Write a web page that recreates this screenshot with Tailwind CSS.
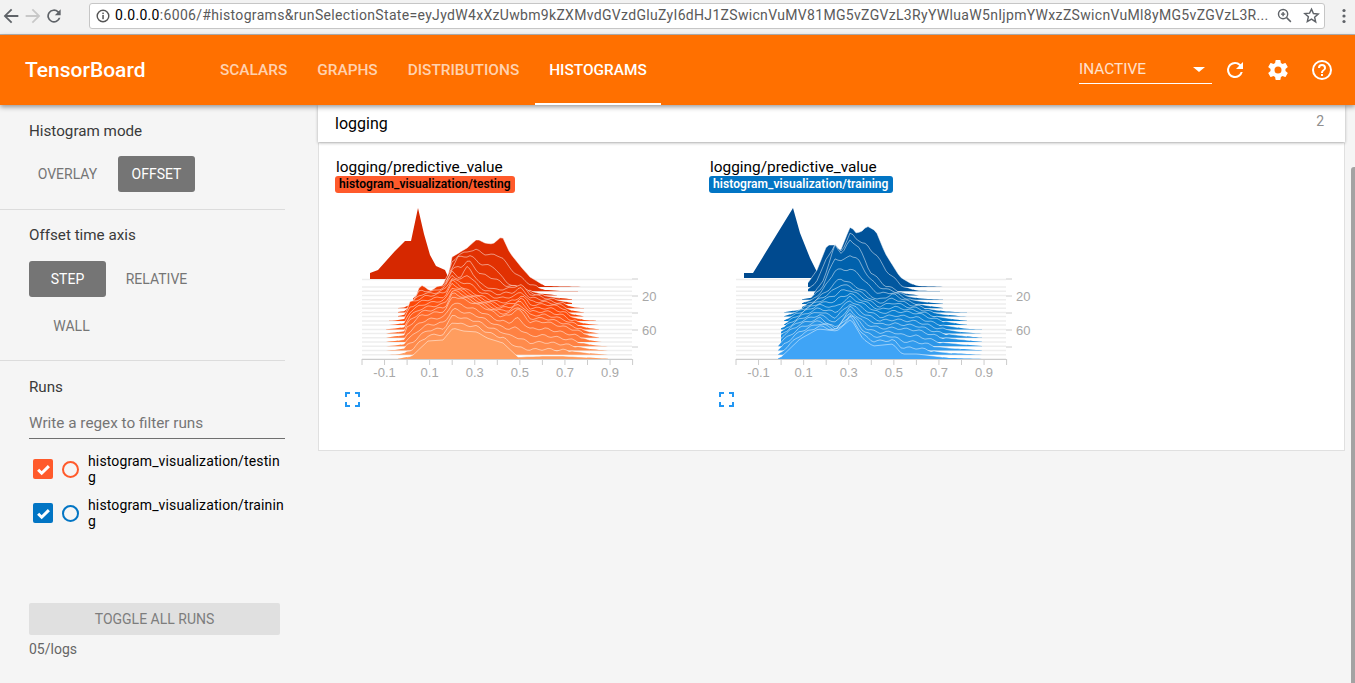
<!DOCTYPE html>
<html lang="en">
<head>
  <meta charset="UTF-8" />
  <title>TensorBoard</title>
  <script src="https://cdn.jsdelivr.net/npm/@tailwindcss/browser@4"></script>
</head>
<body class="h-[683px] overflow-hidden bg-[#f5f5f5] font-['Roboto',sans-serif] text-[14px] flex flex-col">
  <!-- browser chrome -->
  <div class="h-[35px] shrink-0 bg-[#f2f2f2] border-b border-[#b5b5b5] flex items-center pb-[3px]">
    <div class="w-[89px] flex items-center shrink-0">
      <svg width="22" height="22" viewBox="0 0 24 24"><path d="M20 11H7.8l5.6-5.6L12 4l-8 8 8 8 1.4-1.4L7.8 13H20z" fill="#5f6368"/></svg>
      <svg width="22" height="22" viewBox="0 0 24 24"><path d="M4 11h12.2l-5.6-5.6L12 4l8 8-8 8-1.4-1.4 5.6-5.6H4z" fill="#c8c8c8"/></svg>
      <svg width="20" height="20" viewBox="0 0 24 24"><path d="M17.6 6.4A8 8 0 1 0 19.7 14h-2.1a6 6 0 1 1-1.4-6.2L13 11h7V4z" fill="#5f6368"/></svg>
    </div>
    <div class="w-[1236px] h-[26px] bg-white border border-[#c6c6c6] rounded-[3px] flex items-center shrink-0">
      <svg width="14" height="14" viewBox="0 0 14 14" class="ml-[6px] mr-[5px] shrink-0"><circle cx="7" cy="7" r="5.8" fill="none" stroke="#555" stroke-width="1.4"/><rect x="6.3" y="6" width="1.5" height="4.2" fill="#555"/><rect x="6.3" y="3.6" width="1.5" height="1.5" fill="#555"/></svg>
      <div class="w-[1151px] whitespace-nowrap text-[14px] text-[#5a5a5a] tracking-[0.32px]"><span class="text-black">0.0.0.0</span>:6006/#histograms&amp;runSelectionState=eyJydW4xXzUwbm9kZXMvdGVzdGluZyI6dHJ1ZSwicnVuMV81MG5vZGVzL3RyYWluaW5nIjpmYWxzZSwicnVuMl8yMG5vZGVzL3R...</div>
      <svg width="17" height="17" viewBox="0 0 24 24" class="ml-[10px] shrink-0"><circle cx="10" cy="10" r="6.5" fill="none" stroke="#5f6368" stroke-width="2"/><path d="M15 15l6 6M7 10h6M10 7v6" stroke="#5f6368" stroke-width="2" fill="none"/></svg>
      <svg width="17" height="17" viewBox="0 0 24 24" class="ml-[10px] shrink-0"><path d="M12 3l2.7 6.2 6.8.6-5.1 4.5 1.5 6.7L12 17l-5.9 3.5 1.5-6.7-5.1-4.5 6.8-.6z" fill="none" stroke="#5f6368" stroke-width="2"/></svg>
    </div>
    <svg width="4" height="16" viewBox="0 0 4 16" class="ml-[17px]"><circle cx="2" cy="2.5" r="1.6" fill="#5f6368"/><circle cx="2" cy="8" r="1.6" fill="#5f6368"/><circle cx="2" cy="13.5" r="1.6" fill="#5f6368"/></svg>
  </div>

  <!-- toolbar -->
  <header class="relative z-20 h-[70px] shrink-0 bg-[#ff7000] text-white flex items-center shadow-[0_2px_5px_rgba(0,0,0,0.4)]">
    <div class="w-[206px] pl-[25px] pt-[2px] text-[21px] font-medium shrink-0">TensorBoard</div>
    <nav class="flex h-full gap-[2px] text-[15.4px]">
      <a class="h-full flex items-center px-[14px] pt-[2px] text-white/70 font-medium">SCALARS</a>
      <a class="h-full flex items-center px-[14px] pt-[2px] text-white/70 font-medium">GRAPHS</a>
      <a class="h-full flex items-center px-[14px] pt-[2px] text-white/70 font-medium">DISTRIBUTIONS</a>
      <a class="h-full flex items-center px-[14px] font-medium border-b-2 border-white pt-[4px]">HISTOGRAMS</a>
    </nav>
    <div class="ml-auto flex items-center pr-[21px]">
      <div class="w-[133px] h-[29px] border-b border-white flex items-center justify-between text-white/80 text-[15.4px] pr-[7px] pt-[2px] mb-[2px]">
        <span>INACTIVE</span>
        <span class="w-0 h-0 border-x-[6px] border-x-transparent border-t-[5px] border-t-white"></span>
      </div>
      <svg width="24" height="24" viewBox="0 0 24 24" fill="#fff" class="ml-[11px]"><path d="M17.65 6.35A7.96 7.96 0 0 0 12 4a8 8 0 1 0 7.73 10h-2.08A6 6 0 1 1 12 6c1.66 0 3.14.69 4.22 1.78L13 11h7V4z"/></svg>
      <svg width="24" height="24" viewBox="0 0 24 24" fill="#fff" class="ml-[19px]"><path d="M19.43 12.98c.04-.32.07-.64.07-.98s-.03-.66-.07-.98l2.11-1.65a.5.5 0 0 0 .12-.64l-2-3.46a.5.5 0 0 0-.61-.22l-2.49 1a7.3 7.3 0 0 0-1.69-.98l-.38-2.65A.49.49 0 0 0 14 2h-4a.49.49 0 0 0-.49.42l-.38 2.65c-.61.25-1.17.59-1.69.98l-2.49-1a.49.49 0 0 0-.61.22l-2 3.46a.49.49 0 0 0 .12.64l2.11 1.65c-.04.32-.07.65-.07.98s.03.66.07.98l-2.11 1.65a.5.5 0 0 0-.12.64l2 3.46c.12.22.39.3.61.22l2.49-1c.52.4 1.08.73 1.69.98l.38 2.65c.03.24.24.42.49.42h4c.25 0 .46-.18.49-.42l.38-2.65c.61-.25 1.17-.59 1.69-.98l2.49 1c.23.09.49 0 .61-.22l2-3.46a.5.5 0 0 0-.12-.64zM12 15.5a3.5 3.5 0 1 1 0-7 3.5 3.5 0 0 1 0 7z"/></svg>
      <svg width="24" height="24" viewBox="0 0 24 24" fill="#fff" class="ml-[20px]"><path d="M11 18h2v-2h-2zm1-16a10 10 0 1 0 0 20 10 10 0 0 0 0-20zm0 18a8 8 0 1 1 0-16 8 8 0 0 1 0 16zm0-14a4 4 0 0 0-4 4h2a2 2 0 1 1 4 0c0 2-3 1.75-3 5h2c0-2.25 3-2.5 3-5a4 4 0 0 0-4-4z"/></svg>
    </div>
  </header>

  <div class="flex flex-1 min-h-0">
    <!-- sidebar -->
    <aside class="w-[318px] shrink-0 flex flex-col">
      <div class="w-[285px]">
        <div class="pl-[29px] pt-[17px] pb-[17px] border-b border-[#dcdcdc]">
          <div class="text-[15.2px] leading-[18px] text-[#3a3a3a]">Histogram mode</div>
          <div class="flex mt-[16px] text-[#757575]">
            <span class="w-[77px] h-[36px] flex items-center justify-center mr-[12px]">OVERLAY</span>
            <span class="w-[77px] h-[36px] flex items-center justify-center bg-[#757575] text-white rounded-[3px]">OFFSET</span>
          </div>
        </div>
        <div class="pl-[29px] pt-[16px] pb-[16px] border-b border-[#dcdcdc]">
          <div class="text-[15.2px] leading-[18px] text-[#3a3a3a]">Offset time axis</div>
          <div class="flex mt-[17px] text-[#757575]">
            <span class="w-[77px] h-[36px] flex items-center justify-center bg-[#757575] text-white rounded-[3px] mr-[12px]">STEP</span>
            <span class="w-[77px] h-[36px] flex items-center justify-center">RELATIVE</span>
          </div>
          <div class="w-[85px] h-[36px] mt-[11px] flex items-center justify-center text-[#757575]">WALL</div>
        </div>
        <div class="pl-[29px] pt-[17px]">
          <div class="text-[15.2px] leading-[18px] text-[#3a3a3a]">Runs</div>
          <div class="mt-[11px] h-[32px] border-b border-[#6f6f6f] flex items-center pt-[2px] text-[15.3px] text-[#757575]">Write a regex to filter runs</div>
          <div class="flex items-center mt-[14px]">
            <span class="w-[20px] h-[20px] ml-[4px] rounded-[2px] bg-[#ff5a2b] flex items-center justify-center shrink-0"><svg width="15" height="15" viewBox="0 0 14 14"><path d="M2 7.2l3.3 3.3L12 3.8" fill="none" stroke="#fff" stroke-width="2.8"/></svg></span>
            <span class="w-[17px] h-[17px] ml-[9px] rounded-full border-2 border-[#ff5a2b] shrink-0"></span>
            <span class="ml-[9px] w-[197px] leading-[16px] tracking-[0.13px] text-black [overflow-wrap:anywhere]">histogram_visualization/testing</span>
          </div>
          <div class="flex items-center mt-[12px]">
            <span class="w-[20px] h-[20px] ml-[4px] rounded-[2px] bg-[#0275c4] flex items-center justify-center shrink-0"><svg width="15" height="15" viewBox="0 0 14 14"><path d="M2 7.2l3.3 3.3L12 3.8" fill="none" stroke="#fff" stroke-width="2.8"/></svg></span>
            <span class="w-[17px] h-[17px] ml-[9px] rounded-full border-2 border-[#0275c4] shrink-0"></span>
            <span class="ml-[9px] w-[197px] leading-[16px] tracking-[0.13px] text-black [overflow-wrap:anywhere]">histogram_visualization/training</span>
          </div>
        </div>
      </div>
      <div class="pl-[29px] mt-[74px]">
        <div class="w-[251px] h-[32px] bg-[#e0e0e0] rounded-[2px] flex items-center justify-center text-[#7d7d7d]">TOGGLE ALL RUNS</div>
        <div class="mt-[4px] text-[#666]">05/logs</div>
      </div>
    </aside>

    <!-- main -->
    <main class="w-[1027px] shrink-0">
      <div class="relative z-10 h-[37px] bg-white shadow-[0_1px_3px_rgba(0,0,0,0.3)] flex items-center justify-between pl-[17px] pr-[21px]">
        <span class="text-[16px] text-black">logging</span>
        <span class="text-[#8f8f8f] -mt-[4px]">2</span>
      </div>
      <div class="h-[308px] mt-[1px] bg-white border border-[#e0e0e0] border-t-0 flex pl-[16px] pt-[16px]">
        <div class="w-[374px] shrink-0">
          <div class="ml-[1px] text-[15.4px] leading-[17px] text-black">logging/predictive_value</div>
          <div class="w-fit h-[17px] leading-[17px] px-[4px] rounded-[3px] bg-[#ff5a2b] text-[12px] font-semibold text-black tracking-[0.07px]">histogram_visualization/testing</div>
          <svg id="chart-testing" class="block mt-[2px]" width="330" height="220" viewBox="335 195 330 220"></svg>
        </div>
        <div class="w-[374px] shrink-0">
          <div class="ml-[1px] text-[15.4px] leading-[17px] text-black">logging/predictive_value</div>
          <div class="w-fit h-[17px] leading-[17px] px-[4px] rounded-[3px] bg-[#0275c4] text-[12px] font-semibold text-white tracking-[0.07px]">histogram_visualization/training</div>
          <svg id="chart-training" class="block mt-[2px]" width="330" height="220" viewBox="709 195 330 220"></svg>
        </div>
      </div>
    </main>
    <!-- scrollbar -->
    <div class="w-[10px] relative"><div class="absolute left-[6px] top-[62px] bottom-0 w-[4px] rounded-tl-[3px] bg-[#a3a3a3]"></div></div>
  </div>

  <script>
    // ridge keyframes: [row, [x, height]...] in page coordinates
    const orange = {
      left: 362, colors: ['#d62800', '#ff4a08', '#ff9d5f'],
      extra: [279, [[370,0],[370,6],[378,9],[395,28],[405,38],[411,38],[418,71],[424,45],[430,24],[436,13],[445,9],[449,0],[460,0]]],
      keys: [
        [0, [[446,0],[452,30],[467,39],[477,48],[485,44],[493,43],[502,51],[510,34],[522,19],[530,10],[545,1],[585,0]]],
        [2, [[435,0],[442,8],[450,25],[458,38],[470,40],[480,32],[495,28],[505,14],[520,7],[540,2],[560,0]]],
        [4, [[412,0],[420,18],[432,14],[445,20],[452,32],[460,26],[468,38],[480,20],[495,14],[512,16],[520,20],[530,10],[550,5],[567,2],[575,0]]],
        [7, [[395,0],[405,2],[410,14],[425,20],[445,24],[452,36],[468,26],[482,20],[500,14],[515,16],[522,22],[530,12],[550,12],[565,8],[570,3],[585,0]]],
        [12, [[385,0],[405,3],[407,10],[420,22],[445,27],[453,42],[470,36],[485,30],[500,22],[510,22],[517,30],[530,16],[545,16],[560,12],[575,8],[590,2],[600,0]]],
        [17, [[397,0],[412,3],[428,18],[443,19],[453,31],[463,28],[477,27],[487,21],[503,16],[518,2],[543,3],[563,3],[597,1],[610,0]]]
      ]
    };
    const blue = {
      left: 736, colors: ['#004a8f', '#0279cb', '#3fa4f6'],
      extra: [278, [[744,0],[744,5],[753,5],[793,70],[800,45],[810,20],[817,6],[819,0],[830,0]]],
      keys: [
        [0, [[805,0],[817,17],[827,42],[835,42],[840,35],[846,50],[851,62],[855,54],[861,55],[867,61],[876,56],[885,34],[900,10],[910,4],[917,1],[945,0]]],
        [2, [[812,0],[822,12],[835,50],[842,42],[850,55],[858,50],[870,24],[885,10],[905,2],[920,0]]],
        [5, [[800,0],[815,8],[828,18],[840,30],[852,24],[866,16],[878,8],[893,14],[910,6],[930,2],[945,0]]],
        [9, [[783,0],[795,8],[805,14],[818,20],[835,18],[850,28],[865,20],[880,12],[895,14],[917,12],[935,6],[960,1],[970,0]]],
        [13, [[778,0],[782,6],[800,18],[820,24],[836,14],[850,32],[866,18],[880,14],[895,14],[917,12],[940,5],[975,1],[985,0]]],
        [17, [[775,0],[780,1],[800,20],[818,30],[837,28],[851,40],[863,20],[873,13],[893,15],[902,5],[917,5],[950,1],[985,0]]]
      ]
    };

    const ROWS = 18, TOP = 287, BOTTOM = 359;

    function lerpColor(a, b, t) {
      const pa = [1,3,5].map(i => parseInt(a.substr(i,2),16));
      const pb = [1,3,5].map(i => parseInt(b.substr(i,2),16));
      return 'rgb(' + pa.map((v,i) => Math.round(v + (pb[i]-v)*t)).join(',') + ')';
    }
    function colorAt(colors, t) {
      return t < 0.5 ? lerpColor(colors[0], colors[1], t*2) : lerpColor(colors[1], colors[2], (t-0.5)*2);
    }
    function heightAt(pts, x) {
      if (x <= pts[0][0] || x >= pts[pts.length-1][0]) return 0;
      for (let i = 1; i < pts.length; i++) {
        if (x <= pts[i][0]) {
          const t = (x-pts[i-1][0])/((pts[i][0]-pts[i-1][0])||1);
          return pts[i-1][1] + (pts[i][1]-pts[i-1][1])*t;
        }
      }
      return 0;
    }
    function rowHeights(keys, row, xs) {
      let k = 0;
      while (k < keys.length-2 && row > keys[k+1][0]) k++;
      const [ra, pa] = keys[k], [rb, pb] = keys[k+1];
      const t = (row-ra)/(rb-ra);
      return xs.map(x => heightAt(pa,x)*(1-t) + heightAt(pb,x)*t);
    }
    function shape(base, xs, hs, fill) {
      // only the stretch with some height gets a fill and an outline
      const idx = xs.map((x,i) => i).filter(i => hs[i] > 0.05);
      if (!idx.length) return '';
      const top = idx.map(i => xs[i] + ',' + (base-hs[i]).toFixed(1)).join(' L');
      const on = idx.filter(i => hs[i] > 1.5).map(i => xs[i] + ',' + (base-hs[i]).toFixed(1)).join(' L');
      return '<path d="M' + xs[idx[0]] + ',' + base + ' L' + top + ' L' + xs[idx[idx.length-1]] + ',' + base + 'Z" fill="' + fill + '"/>' +
             (on ? '<path d="M' + on + '" fill="none" stroke="#fff" stroke-opacity="0.55" stroke-width="0.9"/>' : '');
    }
    function draw(id, c) {
      const L = c.left, R = L + 270;
      let out = '';
      const xs = [];
      for (let x = L; x <= R; x += 3) xs.push(x);
      // first ridge sits behind the rest
      out += '<line x1="' + L + '" x2="' + R + '" y1="279.5" y2="279.5" stroke="#eee" stroke-width="1.5"/>';
      out += '<path d="M' + c.extra[1].map(p => p[0] + ',' + (c.extra[0]-p[1])).join(' L') + 'Z" fill="' + c.colors[0] + '"/>';
      for (let r = 0; r < ROWS; r++) {
        const base = Math.round((TOP + (BOTTOM-TOP)*r/(ROWS-1))*10)/10;
        const t = r/(ROWS-1);
        // small step-to-step wobble
        const hs = rowHeights(c.keys, r, xs).map((h,i) => h > 4 && r > 0 && r < 17 ? h + Math.sin(i*1.3 + r*1.7)*1.1 : h);
        out += '<line x1="' + L + '" x2="' + R + '" y1="' + base + '" y2="' + base + '" stroke="#eee" stroke-width="1.5"/>';
        out += shape(base, xs, hs, colorAt(c.colors, 0.08 + t*0.92));
      }
      // x axis
      out += '<line x1="' + L + '" x2="' + R + '" y1="359.5" y2="359.5" stroke="#ccc"/>';
      for (let i = 0; i <= 12; i++) {
        const x = L + 22.55*i;
        out += '<line x1="' + x + '" x2="' + x + '" y1="359" y2="365" stroke="#ccc"/>';
      }
      ['-0.1','0.1','0.3','0.5','0.7','0.9'].forEach((s,i) => {
        out += '<text x="' + (L + 22.55 + 45.1*i) + '" y="377" text-anchor="middle" font-family="Liberation Sans" font-size="13" fill="#a8a8a8">' + s + '</text>';
      });
      // step axis
      [279,296,313,330,347].forEach(y => {
        out += '<line x1="' + R + '" x2="' + (R+6) + '" y1="' + y + '" y2="' + y + '" stroke="#ccc"/>';
      });
      out += '<text x="' + (R+10) + '" y="300.5" font-family="Liberation Sans" font-size="13" fill="#a8a8a8">20</text>';
      out += '<text x="' + (R+10) + '" y="334.5" font-family="Liberation Sans" font-size="13" fill="#a8a8a8">60</text>';
      // fullscreen icon
      const fx = L - 17, fy = 392;
      out += '<path transform="translate(' + fx + ',' + fy + ')" d="M1 5V1h4M10 1h4v4M14 10v4h-4M5 14H1v-4" fill="none" stroke="#2196f3" stroke-width="2"/>';
      document.getElementById(id).innerHTML = out;
    }
    draw('chart-testing', orange);
    draw('chart-training', blue);
  </script>
</body>
</html>
